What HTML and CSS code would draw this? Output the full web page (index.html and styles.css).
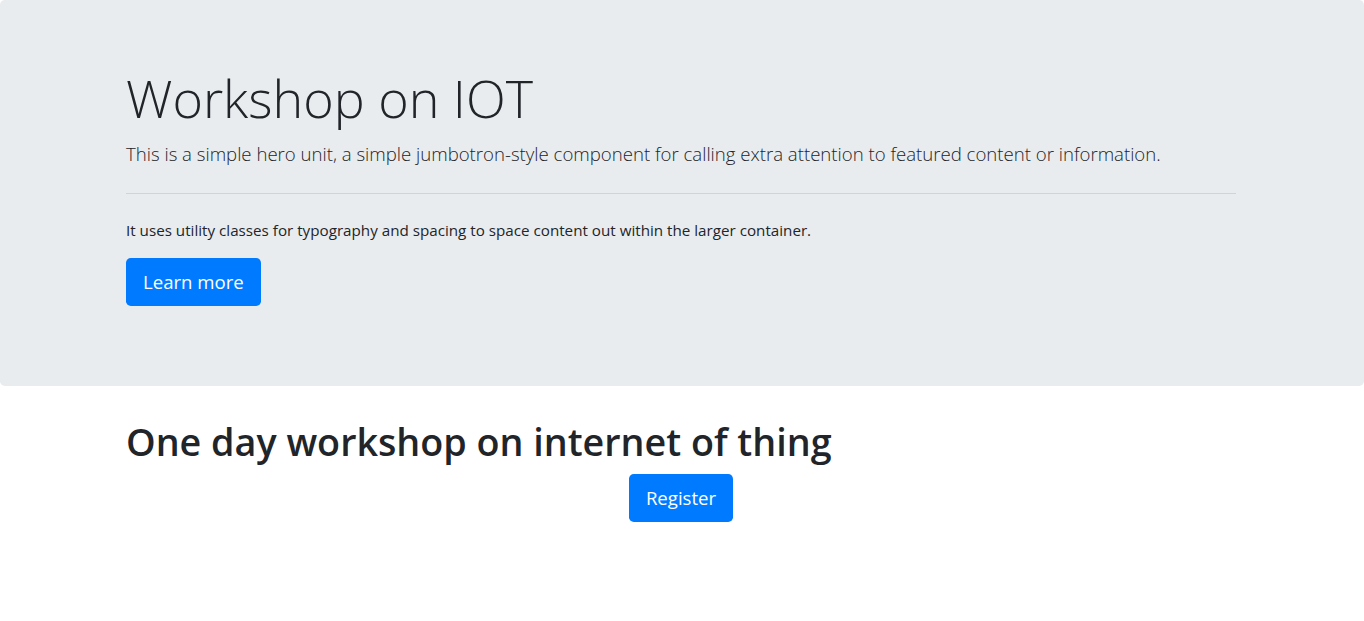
FILE: index.html
```html
<!DOCTYPE html>
<html lang="en">
<head>
<meta charset="utf-8">
<title>Workshop on IOT</title>
<link rel="stylesheet" href="styles.css">
</head>
<body>
<div class="jumbotron">
  <div class="container">
    <h1 class="display">Workshop on IOT</h1>
    <p class="lead">This is a simple hero unit, a simple jumbotron-style component for calling extra attention to featured content or information.</p>
    <hr class="rule">
    <p class="text">It uses utility classes for typography and spacing to space content out within the larger container.</p>
    <p class="lead"><a class="btn" href="#">Learn more</a></p>
  </div>
</div>
<div class="container">
  <h1 class="title">One day workshop on internet of thing</h1>
  <div class="center"><a class="btn" href="#">Register</a></div>
</div>
</body>
</html>
```
FILE: styles.css
```css
html, body {
  margin: 0;
  padding: 0;
}
body {
  font-family: "Open Sans", "Noto Sans", sans-serif;
  font-size: 15.2px;
  line-height: 24px;
  color: #212529;
  background: #fff;
}
.container {
  max-width: 1140px;
  margin: 0 auto;
  padding: 0 16px 0 14px;
  box-sizing: border-box;
}
.jumbotron {
  background: #e9ecef;
  padding: 64px 0;
  margin-bottom: 32px;
  border-radius: 4.8px;
}
.display {
  font-size: 52px;
  font-weight: 300;
  line-height: 67.2px;
  margin: 0 0 8px;
}
.lead {
  font-size: 18.6px;
  font-weight: 300;
  line-height: 30px;
  margin: 0 0 16px;
}
.text {
  margin: 0 0 16px;
}
.rule {
  border: 0;
  border-top: 1px solid rgba(0,0,0,.1);
  margin: 24px 0;
}
.btn {
  display: inline-block;
  background: #007bff;
  color: #fff;
  text-decoration: none;
  font-size: 18.6px;
  font-weight: 400;
  line-height: 30px;
  padding: 9px 17px;
  border-radius: 4.8px;
}
.title {
  font-size: 37.7px;
  font-weight: 600;
  line-height: 48px;
  margin: 0 0 8px;
}
.center {
  text-align: center;
}
```
